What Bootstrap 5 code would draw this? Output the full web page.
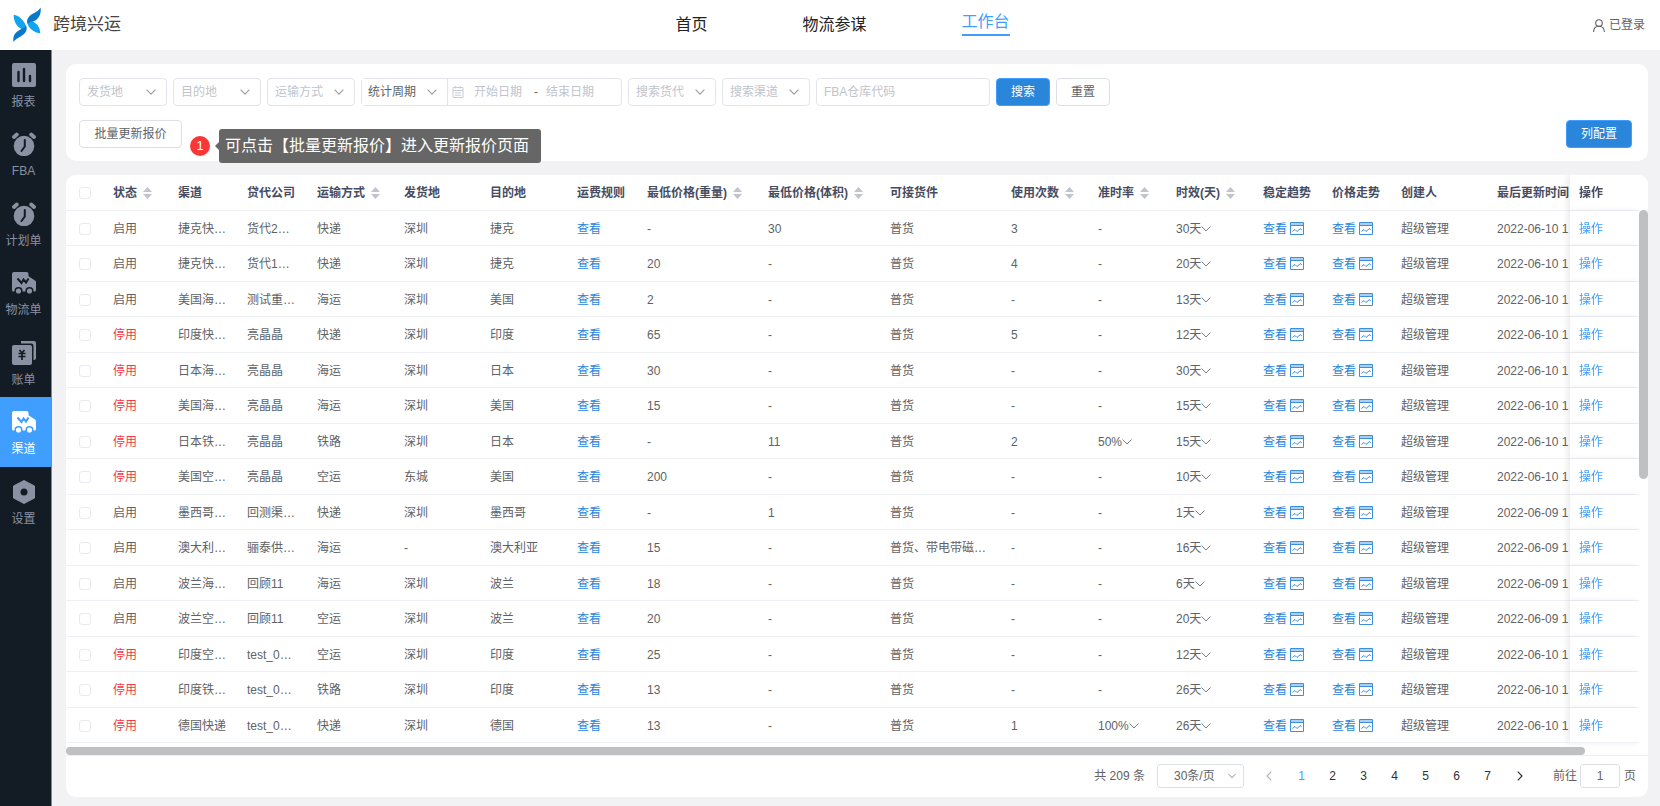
<!DOCTYPE html>
<html lang="zh-CN">
<head>
<meta charset="utf-8">
<meta name="viewport" content="width=device-width, initial-scale=1">
<title>跨境兴运 - 渠道</title>
<link href="https://cdn.jsdelivr.net/npm/bootstrap@5.3.0/dist/css/bootstrap.min.css" rel="stylesheet">
<style>
body{font-family:"Liberation Sans","Noto Sans CJK SC",sans-serif;font-size:12px;line-height:18px;color:#606266;background:#f2f2f5}
.shell{height:100vh;min-width:1200px}
.work-row,.list-panel,.grid-area{min-height:0}
.topbar{height:50px;padding:0 15px 0 12px}
.top-end{flex:1 1 0}
.brand-name{font-size:17px;color:#444;margin-left:11px}
.topnav{gap:95px;margin-left:28px}
.topnav a{font-size:16px;line-height:24px;color:#222;padding:2px 0 3px}
.topnav a.active{color:#409eff;border-bottom:2px solid #409eff;padding:0;margin-bottom:5px}
.side{width:52px;background:#131c25;border-right:1px solid #85898e}
.side a{height:69px;padding:13px 4px 0 0;color:#8a91a3;--hole:#131c25}
.side a:nth-child(even){height:70px}
.side a.active{background:#409eff;color:#fff;--hole:#409eff}
.side svg{width:24px;height:24px;margin-bottom:6px}
.content-area{padding:14px 12px 9px 14px;gap:14px;min-width:0}
.panel{background:#fff;border-radius:10px}
.filters{padding:14px 16px 13px 13px}
.filters form{gap:6px;margin-bottom:14px}
.filters .form-select,.filters .form-control,.filters .btn,.date-range{height:28px;font-size:12px;line-height:18px;border-color:#e2e4ea;border-radius:4px;box-shadow:none}
.filters .form-select{width:88px;padding:0 24px 0 7px;color:#c0c4cc;background-image:url("data:image/svg+xml,%3Csvg xmlns='http://www.w3.org/2000/svg' viewBox='0 0 10 6'%3E%3Cpath d='M.6.6 5 5.2 9.4.6' fill='none' stroke='%23999da6' stroke-width='1.1'/%3E%3C/svg%3E");background-size:10px 6px;background-position:right 10px center}
.filters .form-control{padding:0 7px}
.filters .form-control::placeholder{color:#c0c4cc;opacity:1}
.filters .fba{width:174px}
.filters .date-range{width:261px;border:1px solid #e2e4ea}
.filters .date-range .form-select{width:86px;height:26px;padding-left:6px;border-width:0 1px 0 0;border-radius:0;color:#606266;flex:none}
.filters .date-range .form-control{border:0;height:26px;width:52px;padding:0 2px;background:none}
.range-sep{padding:0 6px 0 10px}
.filters .btn{padding:0 14px;border-color:#dcdfe6;color:#606266;background:#fff;white-space:nowrap}
.filters .btn-primary{background:#2986da;border-color:#409eff;color:#fff}
.filters .btn-batch{width:103px}
.badge-num{width:20px;height:20px;background:#fb3636;color:#fff;font-size:13px;margin-left:8px;margin-top:16px}
.tip{position:absolute;left:100%;top:9px;margin-left:37px;height:34px;padding:0 12px 0 6px;background:#666;color:#fff;font-size:16px;line-height:34px;border-radius:3px;white-space:nowrap;z-index:5}
.tip::before{content:"";position:absolute;left:-4px;top:13px;border:4px solid transparent;border-left:0;border-right-color:#666}
.grid-scroll{overflow:hidden;margin-right:9px;height:100%;border-top-left-radius:10px}
.channels{table-layout:fixed;width:1640px;min-width:104%;margin:0;border-collapse:separate;border-spacing:0}
.channels th,.channels td{height:35px;padding:1px 0 0 9px;border-bottom:1px solid #eef0f5;white-space:nowrap;vertical-align:middle;color:#606266;background:#fff}
.channels tbody tr:nth-child(even) td{height:36px}
.channels th{height:36px;padding-top:0;color:#474c5f;font-weight:700}
.channels td:nth-child(1),.channels th:nth-child(1){padding-left:13px}
.channels .fixed-col{position:sticky;right:0;box-shadow:-3px 0 6px rgba(0,0,0,.08)}
.channels a{color:#2986da;text-decoration:none}
.channels .fixed-col a{color:#409eff}
.channels .off{color:#f5384a}
.channels .form-check-input{width:12px;height:12px;margin:0;border-color:#e8eaee;border-radius:3px;display:block}
.sorter{width:9px;height:12px;margin-left:6px;vertical-align:-2px}
.trend{width:14px;height:14px;margin-left:3px;vertical-align:-2px}
.chev{width:10px;height:6px;vertical-align:1px}
.head-cap{position:absolute;top:0;right:0;width:9px;height:36px;background:#fff;border-top-right-radius:10px}
.thumb-v{position:absolute;right:0;top:35px;width:9px;height:47%;background:#bfc0c2;border-radius:5px}
.bar-h{height:9px;border-bottom:1px solid #eef0f5}
.thumb-h{width:96%;height:8px;background:#bfc0c2;border-radius:4px}
.pager{height:41px;padding:0 12px 2px 0}
.pager .form-select{width:87px;height:24px;padding:0 24px 0 16px;font-size:12px;line-height:18px;color:#606266;border-color:#dcdfe6;border-radius:3px;margin:0 8px 0 12px;background-image:url("data:image/svg+xml,%3Csvg xmlns='http://www.w3.org/2000/svg' viewBox='0 0 10 6'%3E%3Cpath d='M1.5 1 5 4.6 8.5 1' fill='none' stroke='%23b4b8c0' stroke-width='1.1'/%3E%3C/svg%3E");background-size:10px 6px;background-position:right 6px center}
.pager .pagination{margin:0}
.pager .page-item .page-link{width:31px;border:0;margin:0;background:none;padding:0;text-align:center;color:#303133;font-size:12px;line-height:24px}
.pager .page-item.active .page-link{color:#409eff}
.pager .page-item.step .page-link{width:34px}
.pager .step svg{width:6px;height:10px}
.pager .form-control{width:40px;height:24px;padding:0;font-size:12px;text-align:center;color:#606266;border-color:#dcdfe6;border-radius:3px;margin:0 4px 0 3px}
</style>
</head>
<body>
<svg class="d-none" xmlns="http://www.w3.org/2000/svg">
  <symbol id="i-sort" viewBox="0 0 9 12"><path d="M4.500 0 9 5H0zM0 7h9l-4.500 5z" fill="#c0c4cc"/></symbol>
  <symbol id="i-down" viewBox="0 0 10 6"><path d="M.5.5 5 5 9.500.5" fill="none" stroke="#7d8086"/></symbol>
  <symbol id="i-trend" viewBox="0 0 14 14"><path d="M1 1h12v3H1z" fill="#a9cff2"/><path d="M.5 1.500h13v12H.5zM.5 4.500h13M2.500 10.500 5 8.500 7 10.500 10.500 7.500 11.500 9" fill="none" stroke="#3d8edb"/></symbol>
  <symbol id="i-clock" viewBox="0 0 24 24"><circle cx="12" cy="14" r="10.300" fill="currentColor"/><path d="M2 5 4.800 2.500M22 5 19.200 2.500" stroke="currentColor" stroke-width="3.800" stroke-linecap="round"/><path d="M12.800 8v6.500L9.500 19" fill="none" stroke="var(--hole)" stroke-width="2" stroke-linecap="round"/></symbol>
  <symbol id="i-truck" viewBox="0 0 24 24"><path d="M2 1h12.500a2 2 0 0 1 2 1.800v2.500L23 9.500a2 2 0 0 1 1 1.800V19a1.500 1.500 0 0 1-1.500 1.500H1.500A1.500 1.500 0 0 1 0 19V3a2 2 0 0 1 2-2z" fill="currentColor"/><path d="M5.500 7.500 9.500 12l2-3.500 2.500 3 2.500-4" fill="none" stroke="var(--hole)" stroke-width="2"/><g fill="currentColor" stroke="var(--hole)" stroke-width="1.500"><circle cx="6.500" cy="20" r="3.300"/><circle cx="17.500" cy="20" r="3.300"/></g></symbol>
</svg>
<div class="shell d-flex flex-column">
  <header class="topbar navbar bg-white flex-nowrap flex-shrink-0">
    <a href="#" class="top-end d-flex align-items-center text-decoration-none">
      <svg width="30" height="37" viewBox="36 14 90 110"><path d="M41 37C58 40 70 52 78 70C80 76 76 80 70 83C54 76 41 62 41 37z" fill="#12a4ee"/><path d="M78 70C84 82 76 94 62 102C52 107 45 112 40 118C38 98 46 90 60 82C68 78 75 76 78 70z" fill="#0a78c8"/><path d="M122 15C124 36 116 48 104 55C95 60 89 62 85 68C76 56 84 42 98 34C108 29 116 24 122 15z" fill="#0a78c8"/><path d="M84 68C82 62 90 57 96 56C110 62 120 72 121 93C104 90 92 82 84 68z" fill="#12a4ee"/></svg>
      <span class="brand-name">跨境兴运</span>
    </a>
    <nav class="topnav d-flex align-items-center">
      <a class="text-decoration-none" href="#">首页</a><a class="text-decoration-none" href="#">物流参谋</a><a class="active text-decoration-none" href="#">工作台</a>
    </nav>
    <div class="top-end d-flex align-items-center justify-content-end">
      <svg class="me-1" width="12" height="13" viewBox="0 0 12 13" fill="none" stroke="#606266" stroke-width="1.100"><circle cx="6" cy="4" r="3.300"/><path d="M.6 13C.6 9 3 7.300 6 7.300S11.400 9 11.400 13"/></svg>
      <span>已登录</span>
    </div>
  </header>
  <div class="work-row d-flex flex-grow-1">
    <nav class="side flex-shrink-0" id="side"></nav>
    <main class="content-area d-flex flex-column flex-grow-1">
      <section class="panel filters flex-shrink-0">
        <form class="d-flex flex-wrap">
          <select class="form-select" aria-label="发货地"><option>发货地</option></select>
          <select class="form-select" aria-label="目的地"><option>目的地</option></select>
          <select class="form-select" aria-label="运输方式"><option>运输方式</option></select>
          <div class="date-range d-flex align-items-center">
            <select class="form-select" aria-label="统计周期"><option>统计周期</option></select>
            <svg class="ms-1 me-2 flex-shrink-0" width="12" height="12" viewBox="0 0 12 12" fill="none" stroke="#c8ccd4"><path d="M1 1.500h10v10H1zM1 4.500h10M3.500 0v2.500M8.500 0v2.500M3 6.800h6M3 9.200h6"/></svg>
            <input class="form-control" placeholder="开始日期" aria-label="开始日期"><span class="range-sep">-</span><input class="form-control" placeholder="结束日期" aria-label="结束日期">
          </div>
          <select class="form-select" aria-label="搜索货代"><option>搜索货代</option></select>
          <select class="form-select" aria-label="搜索渠道"><option>搜索渠道</option></select>
          <input class="form-control fba" placeholder="FBA仓库代码" aria-label="FBA仓库代码">
          <button type="button" class="btn btn-primary">搜索</button>
          <button type="button" class="btn">重置</button>
        </form>
        <div class="d-flex justify-content-between align-items-start">
          <div class="position-relative d-flex align-items-start">
            <button type="button" class="btn btn-batch">批量更新报价</button>
            <div class="position-absolute start-100"><div class="badge-num rounded-circle d-flex align-items-center justify-content-center">1</div></div>
            <div class="tip" role="tooltip">可点击【批量更新报价】进入更新报价页面</div>
          </div>
          <button type="button" class="btn btn-primary">列配置</button>
        </div>
      </section>
      <section class="panel list-panel d-flex flex-column flex-grow-1">
        <div class="grid-area position-relative flex-grow-1">
          <div class="grid-scroll">
            <table class="channels">
              <colgroup id="cols"></colgroup>
              <thead><tr id="heads"></tr></thead>
              <tbody id="rows"></tbody>
            </table>
          </div>
          <div class="head-cap"></div>
          <div class="thumb-v"></div>
        </div>
        <div class="bar-h flex-shrink-0"><div class="thumb-h"></div></div>
        <div class="pager d-flex align-items-center justify-content-end flex-shrink-0">
          <span>共 209 条</span>
          <select class="form-select" aria-label="每页条数"><option>30条/页</option></select>
          <ul class="pagination">
            <li class="page-item step"><button class="page-link" aria-label="上一页"><svg viewBox="0 0 6 10"><path d="M5.200.6 1 5l4.200 4.400" fill="none" stroke="#b4b8c0" stroke-width="1.200"/></svg></button></li>
            <li class="page-item active"><a class="page-link" href="#">1</a></li><li class="page-item"><a class="page-link" href="#">2</a></li><li class="page-item"><a class="page-link" href="#">3</a></li><li class="page-item"><a class="page-link" href="#">4</a></li><li class="page-item"><a class="page-link" href="#">5</a></li><li class="page-item"><a class="page-link" href="#">6</a></li><li class="page-item"><a class="page-link" href="#">7</a></li>
            <li class="page-item step"><button class="page-link" aria-label="下一页"><svg viewBox="0 0 6 10"><path d="M.8.6 5 5 .8 9.400" fill="none" stroke="#303133" stroke-width="1.200"/></svg></button></li>
          </ul>
          <label for="goto" class="ms-3">前往</label><input id="goto" class="form-control" value="1"><span>页</span>
        </div>
      </section>
    </main>
  </div>
</div>
<script src="https://cdn.jsdelivr.net/npm/bootstrap@5.3.0/dist/js/bootstrap.bundle.min.js"></script>
<script>
const use = (id, cls, vb) => `<svg class="${cls}" viewBox="${vb}"><use href="#${id}"/></svg>`;
const menu = [
  ['报表', '<svg viewBox="0 0 24 24"><rect width="24" height="24" rx="2" fill="currentColor"/><path d="M6.500 9v9M12 6v12M18 13v5" stroke="var(--hole)" stroke-width="2.400" stroke-linecap="round"/></svg>'],
  ['FBA', use('i-clock', '', '0 0 24 24')],
  ['计划单', use('i-clock', '', '0 0 24 24')],
  ['物流单', use('i-truck', '', '0 0 24 24')],
  ['账单', '<svg viewBox="0 0 24 24"><path d="M9 0h13a2 2 0 0 1 2 2v15a2 2 0 0 1-2 2h-.500V4.500a2 2 0 0 0-2-2H9z" fill="currentColor"/><rect y="4" width="20" height="20" rx="2" fill="currentColor"/><path d="M7.500 9l2.500 3 2.500-3M6.500 12.500h7M6.500 15.500h7M10 12v7" fill="none" stroke="var(--hole)" stroke-width="1.700"/></svg>'],
  ['渠道', use('i-truck', '', '0 0 24 24')],
  ['设置', '<svg viewBox="0 0 24 24"><path d="M12 .5 22.500 6v12L12 23.500 1.500 18V6z" fill="currentColor" stroke="currentColor" stroke-linejoin="round"/><circle cx="12" cy="12" r="3.500" fill="var(--hole)"/></svg>']
];
document.getElementById('side').innerHTML = menu.map(([t, i]) =>
  `<a href="#" class="d-flex flex-column align-items-center text-decoration-none${t === '渠道' ? ' active' : ''}">${i}<span>${t}</span></a>`).join('');

const widths = [38,65,69,70,87,86,87,70,121,122,121,87,78,87,69,69,96,149,69];
document.getElementById('cols').innerHTML = widths.map(w => `<col style="width:${w}px">`).join('');
const heads = ['','状态*','渠道','贷代公司','运输方式*','发货地','目的地','运费规则','最低价格(重量)*','最低价格(体积)*','可接货件','使用次数*','准时率*','时效(天)*','稳定趋势','价格走势','创建人','最后更新时间','操作'];
const check = '<input type="checkbox" class="form-check-input" aria-label="选择">';
document.getElementById('heads').innerHTML = heads.map((h, i) =>
  `<th scope="col"${i === 18 ? ' class="fixed-col"' : ''}>${i ? h.replace('*', use('i-sort', 'sorter', '0 0 9 12')) : check}</th>`).join('');

const rows = `1|捷克快…|货代2…|快递|深圳|捷克|-|30|普货|3|-|30|10
1|捷克快…|货代1…|快递|深圳|捷克|20|-|普货|4|-|20|10
1|美国海…|测试重…|海运|深圳|美国|2|-|普货|-|-|13|10
0|印度快…|亮晶晶|快递|深圳|印度|65|-|普货|5|-|12|10
0|日本海…|亮晶晶|海运|深圳|日本|30|-|普货|-|-|30|10
0|美国海…|亮晶晶|海运|深圳|美国|15|-|普货|-|-|15|10
0|日本铁…|亮晶晶|铁路|深圳|日本|-|11|普货|2|50%|15|10
0|美国空…|亮晶晶|空运|东城|美国|200|-|普货|-|-|10|10
1|墨西哥…|回测渠…|快递|深圳|墨西哥|-|1|普货|-|-|1|09
1|澳大利…|骊泰供…|海运|-|澳大利亚|15|-|普货、带电带磁…|-|-|16|09
1|波兰海…|回顾11|海运|深圳|波兰|18|-|普货|-|-|6|09
1|波兰空…|回顾11|空运|深圳|波兰|20|-|普货|-|-|20|09
0|印度空…|test_0…|空运|深圳|印度|25|-|普货|-|-|12|10
0|印度铁…|test_0…|铁路|深圳|印度|13|-|普货|-|-|26|10
0|德国快递|test_0…|快递|深圳|德国|13|-|普货|1|100%|26|10`.split('\n').map(r => r.split('|'));
const chev = use('i-down', 'chev', '0 0 10 6');
const trend = `<a href="#">查看${use('i-trend', 'trend', '0 0 14 14')}</a>`;
document.getElementById('rows').innerHTML = rows.map(r => {
  const cells = [check, r[0] === '1' ? '启用' : '<span class="off">停用</span>', r[1], r[2], r[3], r[4], r[5], '<a href="#">查看</a>',
    r[6], r[7], r[8], r[9], r[10] + (r[10] === '-' ? '' : chev), r[11] + '天' + chev, trend, trend, '超级管理', `2022-06-${r[12]} 1`, '<a href="#">操作</a>'];
  return '<tr>' + cells.map((c, i) => `<td${i === 18 ? ' class="fixed-col"' : ''}>${c}</td>`).join('') + '</tr>';
}).join('');
</script>
</body>
</html>
